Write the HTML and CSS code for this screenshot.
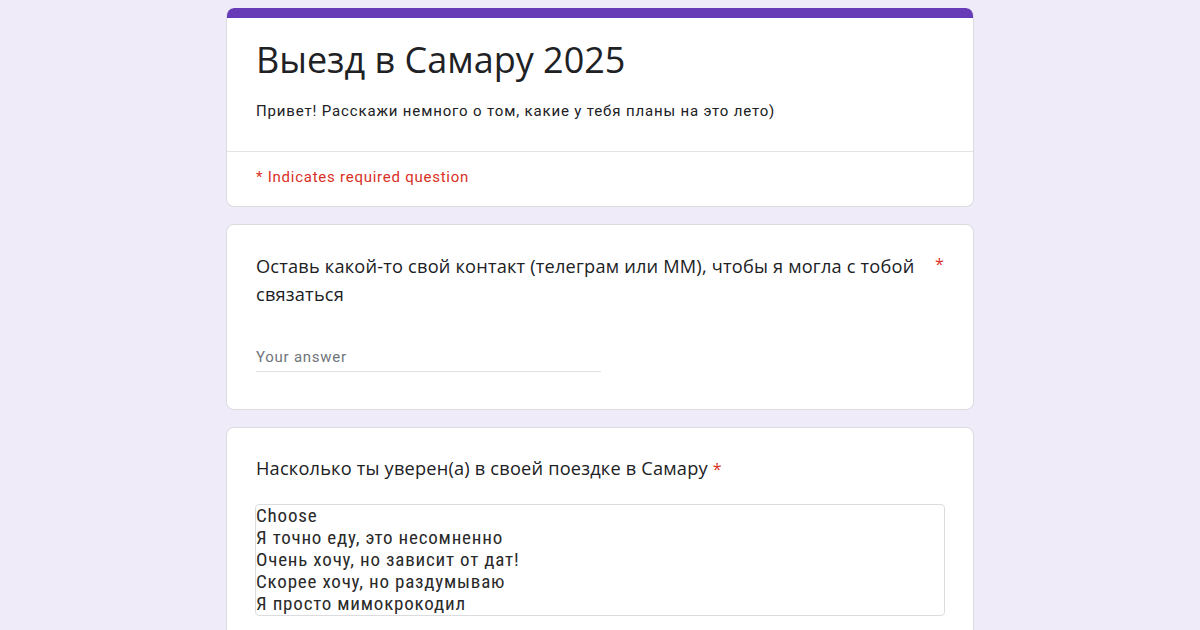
FILE: index.html
```html
<!DOCTYPE html>
<html lang="ru">
<head>
<meta charset="utf-8">
<title>Выезд в Самару 2025</title>
<link rel="stylesheet" href="styles.css">
</head>
<body>
<main class="form">
  <section class="card header-card">
    <div class="accent"></div>
    <div class="header-main">
      <h1 class="title">Выезд в Самару 2025</h1>
      <p class="desc">Привет! Расскажи немного о том, какие у тебя планы на это лето)</p>
    </div>
    <div class="header-foot">
      <span class="required-note">* Indicates required question</span>
    </div>
  </section>

  <section class="card question-card q-contact">
    <div class="q-head">
      <div class="q-text">Оставь какой-то свой контакт (телеграм или ММ), чтобы я могла с тобой связаться</div>
      <span class="star star-side">*</span>
    </div>
    <div class="answer">
      <span class="placeholder">Your answer</span>
    </div>
  </section>

  <section class="card question-card q-choice">
    <div class="q-head">
      <div class="q-text">Насколько ты уверен(а) в своей поездке в Самару <span class="star star-inline">*</span></div>
    </div>
    <div class="listbox">
      <div class="opt">Choose</div>
      <div class="opt">Я точно еду, это несомненно</div>
      <div class="opt">Очень хочу, но зависит от дат!</div>
      <div class="opt">Скорее хочу, но раздумываю</div>
      <div class="opt">Я просто мимокрокодил</div>
    </div>
  </section>
</main>
</body>
</html>
```

FILE: styles.css
```css
html, body {
  margin: 0;
  padding: 0;
  height: 100%;
  overflow: hidden;
}
body {
  background: #f0ebf8;
  font-family: Roboto, "Noto Sans", sans-serif;
  color: #202124;
}
.form {
  width: 748px;
  margin: 0 auto;
  padding-top: 8px;
  display: flex;
  flex-direction: column;
  gap: 17px;
}
.card {
  background: #fff;
  border: 1px solid #dadce0;
  border-radius: 8px;
  overflow: hidden;
}
.header-card {
  border-top: none;
}
.accent {
  height: 10px;
  background: #673ab7;
  border-radius: 8px 8px 0 0;
  margin: 0 -1px;
}
.header-main {
  padding: 20px 29px 30px;
  border-bottom: 1px solid #e3e3e6;
}
.title {
  margin: 0;
  font-family: "Open Sans", sans-serif;
  font-weight: 400;
  font-size: 36px;
  line-height: 44px;
  color: #202124;
}
.desc {
  margin: 19px 0 0;
  font-size: 15px;
  line-height: 20px;
  letter-spacing: 0.85px;
  color: #202124;
}
.header-foot {
  padding: 15px 29px 19px;
}
.required-note {
  font-size: 15px;
  line-height: 20px;
  letter-spacing: 0.75px;
  color: #d93025;
}
.q-contact {
  padding: 27px 28px 37px 29px;
}
.q-choice {
  padding: 26px 28px 37px 28px;
}
.q-choice .q-text {
  padding-left: 1px;
}
.q-head {
  display: flex;
  gap: 12px;
}
.q-text {
  flex: 1;
  font-family: "Open Sans", sans-serif;
  font-size: 18.2px;
  line-height: 28px;
  letter-spacing: 0.2px;
  color: #202124;
}
.star {
  color: #d93025;
}
.star-side {
  font-family: "Open Sans", sans-serif;
  font-size: 16px;
  line-height: 24px;
  width: 10px;
}
.star-inline {
  font-size: 16px;
}
.answer {
  margin-top: 39px;
  width: 345px;
  border-bottom: 1px solid #e0e0e0;
  padding-bottom: 4px;
}
.placeholder {
  font-size: 15px;
  line-height: 20px;
  letter-spacing: 0.75px;
  color: #70757a;
}
.listbox {
  margin-top: 21px;
  border: 1px solid #dadce0;
  border-radius: 4px;
  display: flex;
  flex-direction: column;
}
.opt {
  font-family: "Liberation Sans Narrow", "Roboto Condensed", "Liberation Sans", sans-serif;
  font-size: 19px;
  line-height: 22px;
  letter-spacing: 0.8px;
  color: #2a2a2a;
}
```
